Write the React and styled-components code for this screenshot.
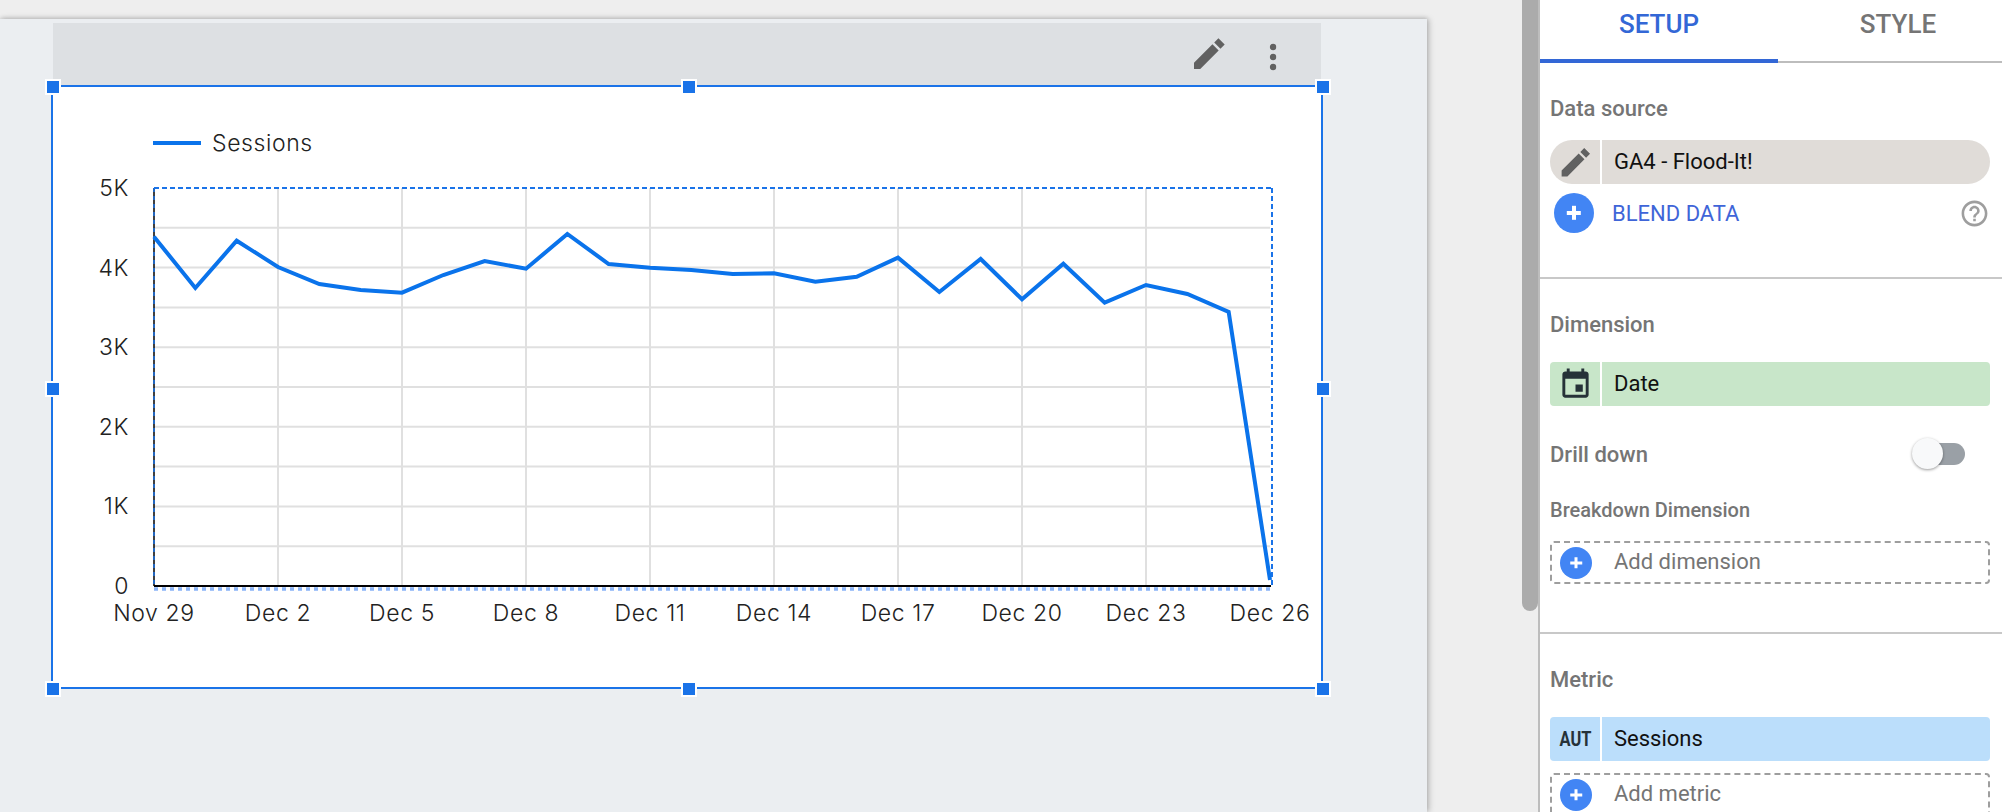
import React from "react";
import styled, { createGlobalStyle } from "styled-components";

const GlobalStyle = createGlobalStyle`
  html, body {
    margin: 0;
    padding: 0;
    background: #eeeeee;
    overflow: hidden;
  }
  * { box-sizing: border-box; }
`;

const Layout = styled.div`
  display: flex;
  width: 2002px;
  height: 812px;
  overflow: hidden;
  background: #eeeeee;
  font-family: Roboto, "Liberation Sans", sans-serif;
`;

const Workspace = styled.div`
  flex: 0 0 1522px;
  padding-top: 19px;
`;

const Page = styled.div`
  width: 1427px;
  height: 793px;
  padding: 4px 0 0 53px;
  background: #ebeef1;
  box-shadow: 2px 0 6px rgba(0, 0, 0, 0.22), 0 -1px 4px rgba(0, 0, 0, 0.12);
`;

const ChartHeader = styled.div`
  display: flex;
  align-items: center;
  justify-content: flex-end;
  width: 1268px;
  height: 62px;
  padding-right: 36px;
  gap: 32px;
  background: #dde0e3;
`;

const HeaderIcon = styled.svg`
  display: block;
  fill: #616161;
`;

const DotsIcon = styled(HeaderIcon)`
  margin-top: 6px;
`;

const ChartFrame = styled.div`
  position: relative;
  width: 1272px;
  height: 604px;
  margin-left: -2px;
  background: #ffffff;
  border: 2px solid #1a73e8;
`;

const Handle = styled.span`
  position: absolute;
  width: 16px;
  height: 16px;
  background: #1a73e8;
  border: 2px solid #ffffff;
  left: ${(p) => p.$x};
  top: ${(p) => p.$y};
  transform: translate(-50%, -50%);
`;

const Legend = styled.div`
  display: flex;
  align-items: center;
  gap: 11px;
  padding: 43px 0 0 100px;
  height: 68px;
`;

const LegendLine = styled.span`
  width: 48px;
  height: 4px;
  background: #0a73eb;
`;

const LegendText = styled.span`
  font-family: Inter, sans-serif;
  font-weight: 300;
  font-size: 23px;
  letter-spacing: 0.6px;
  color: #222222;
`;

const ChartSvg = styled.svg`
  display: block;
  margin-left: -53px;
  text {
    font-family: Inter, sans-serif;
    font-weight: 300;
    font-size: 23px;
    letter-spacing: 0.6px;
    fill: #222222;
  }
`;

const Scrollbar = styled.div`
  flex: 0 0 18px;
  border-right: 2px solid #bdbdbd;
`;

const ScrollThumb = styled.div`
  width: 16px;
  height: 611px;
  background: #ababab;
  border-radius: 0 0 8px 8px;
`;

const Panel = styled.aside`
  flex: 0 0 462px;
  background: #ffffff;
  overflow: hidden;
`;

const Tabs = styled.div`
  display: grid;
  grid-template-columns: 238px 240px;
  height: 63px;
  border-bottom: 2px solid #bdbdbd;
`;

const Tab = styled.div`
  height: 63px;
  padding-top: 8px;
  text-align: center;
  font-size: 26px;
  line-height: 32px;
  font-weight: 500;
  color: ${(p) => (p.$active ? "#3367d6" : "#757575")};
  border-bottom: ${(p) => (p.$active ? "4px solid #3367d6" : "none")};
`;

const Section = styled.section`
  height: ${(p) => p.$height}px;
  padding: 0 12px 0 10px;
  border-bottom: ${(p) => (p.$last ? "none" : "2px solid #c8c8c8")};
`;

const SectionTitle = styled.div`
  color: #757575;
  font-weight: 500;
  font-size: ${(p) => p.$size || 22}px;
  line-height: 24px;
  padding-top: ${(p) => p.$top}px;
  margin-bottom: ${(p) => p.$bottom}px;
`;

const Chip = styled.div`
  display: flex;
  height: 44px;
  border-radius: ${(p) => (p.$pill ? "22px" : "4px")};
  overflow: hidden;
  background: ${(p) => p.$color};
`;

const ChipIcon = styled.div`
  flex: 0 0 50px;
  display: flex;
  align-items: center;
  justify-content: center;
`;

const ChipLabel = styled.div`
  flex: 1;
  margin-left: 2px;
  padding: 0 0 2px 12px;
  display: flex;
  align-items: center;
  font-size: 22px;
  color: #111111;
  box-shadow: -2px 0 0 #ffffff;
`;

const FieldType = styled.span`
  font-size: 20px;
  font-weight: 700;
  color: #263238;
  transform: scaleX(0.82);
`;

const BlendRow = styled.div`
  display: flex;
  align-items: center;
  height: 40px;
  margin-top: 9px;
  padding: 0 0 0 4px;
`;

const BlendText = styled.span`
  margin-left: 18px;
  flex: 1;
  color: #3f65d8;
  font-size: 22px;
`;

const PlusCircle = styled.span`
  position: relative;
  flex: none;
  display: block;
  width: ${(p) => p.$size}px;
  height: ${(p) => p.$size}px;
  border-radius: 50%;
  background: #4285f4;
  &::before, &::after {
    content: "";
    position: absolute;
    left: 50%;
    top: 50%;
    background: #ffffff;
    transform: translate(-50%, -50%);
  }
  &::before {
    width: ${(p) => p.$size * 0.36}px;
    height: ${(p) => (p.$size > 36 ? 4 : 3)}px;
  }
  &::after {
    width: ${(p) => (p.$size > 36 ? 4 : 3)}px;
    height: ${(p) => p.$size * 0.36}px;
  }
`;

const ToggleRow = styled.div`
  display: flex;
  align-items: center;
  justify-content: space-between;
  height: 32px;
  margin-top: 32px;
  padding-right: 25px;
`;

const ToggleLabel = styled.span`
  color: #757575;
  font-weight: 500;
  font-size: 22px;
`;

const Toggle = styled.span`
  position: relative;
  display: block;
  width: 38px;
  height: 22px;
  border-radius: 11px;
  background: #9aa0a6;
`;

const ToggleKnob = styled.span`
  position: absolute;
  left: -15px;
  top: -5px;
  width: 31px;
  height: 31px;
  border-radius: 50%;
  background: #f8f9fa;
  box-shadow: 0 1px 3px rgba(0, 0, 0, 0.4);
`;

const AddBox = styled.div`
  display: flex;
  align-items: center;
  height: 43px;
  padding: 0 0 0 8px;
  border: 2px dashed #9e9e9e;
  border-radius: 4px;
  color: #757575;
  font-size: 22px;
  margin-top: ${(p) => p.$top || 0}px;
`;

const AddText = styled.span`
  margin: -2px 0 0 22px;
`;

const MaterialIcon = ({ d, size, fill }) => (
  <HeaderIcon width={size} height={size} viewBox="0 0 24 24" style={{ fill }}>
    <path d={d} />
  </HeaderIcon>
);

const PENCIL = "M3 17.25V21h3.75L17.81 9.94l-3.75-3.75L3 17.25zM21.41 6.34l-3.75-3.75-2.53 2.54 3.75 3.75 2.53-2.54z";
const EVENT = "M17 12h-5v5h5v-5zM16 1v2H8V1H6v2H5c-1.11 0-1.99.9-1.99 2L3 19c0 1.1.89 2 2 2h14c1.1 0 2-.9 2-2V5c0-1.1-.9-2-2-2h-1V1h-2zm3 18H5V8h14v11z";
const HELP = "M11 18h2v-2h-2v2zm1-16C6.48 2 2 6.48 2 12s4.48 10 10 10 10-4.48 10-10S17.52 2 12 2zm0 18c-4.41 0-8-3.59-8-8s3.59-8 8-8 8 3.59 8 8-3.59 8-8 8zm0-14c-2.21 0-4 1.79-4 4h2c0-1.1.9-2 2-2s2 .9 2 2c0 2-3 1.75-3 5h2c0-2.25 3-2.5 3-5 0-2.21-1.79-4-4-4z";

// sessions per day, as pixel heights read off the reference
const SERIES = [
  236.7, 288, 240.7, 267, 284, 290, 292.7, 275, 261, 268.7, 234, 264, 267.7, 270,
  274, 273.3, 281.7, 276.7, 257.7, 292, 259, 299.3, 263.7, 302.7, 285, 294, 312, 580,
];
const PLOT = { left: 154, right: 1270, top: 188, bottom: 586 };
const DAY = (PLOT.right - PLOT.left) / 27;
const ROW = (PLOT.bottom - PLOT.top) / 10;
const X_LABELS = ["Nov 29", "Dec 2", "Dec 5", "Dec 8", "Dec 11", "Dec 14", "Dec 17", "Dec 20", "Dec 23", "Dec 26"];
const Y_LABELS = ["5K", "4K", "3K", "2K", "1K", "0"];

const HANDLE_STOPS = ["0%", "calc(50% + 2px)", "calc(100% + 2px)"];

// the svg's origin sits at page (0, 155), so the plot uses page coordinates
function LineChart() {
  const points = SERIES.map((y, i) => `${PLOT.left + i * DAY},${y}`).join(" ");
  return (
    <ChartSvg width="1320" height="500" viewBox="0 155 1320 500">
      {Array.from({ length: 9 }, (_, i) => (
        <line key={i} x1={PLOT.left} x2={PLOT.right} y1={PLOT.top + (i + 1) * ROW} y2={PLOT.top + (i + 1) * ROW} stroke="#e0e0e0" strokeWidth="2" />
      ))}
      {X_LABELS.slice(1, -1).map((_, i) => (
        <line key={i} x1={PLOT.left + (i + 1) * 124} x2={PLOT.left + (i + 1) * 124} y1={PLOT.top} y2={PLOT.bottom} stroke="#e0e0e0" strokeWidth="2" />
      ))}
      <line x1={PLOT.left} x2={PLOT.right + 1} y1={PLOT.bottom} y2={PLOT.bottom} stroke="#000000" strokeWidth="2" />
      <line x1={PLOT.left} x2={PLOT.left} y1={PLOT.top} y2={PLOT.bottom} stroke="#000000" strokeWidth="1.5" />
      <line x1={PLOT.left} x2={PLOT.left} y1={PLOT.top} y2={PLOT.bottom} stroke="#1a73e8" strokeWidth="1.5" strokeDasharray="4 4" />
      <line x1={PLOT.left} x2={PLOT.right + 2} y1={PLOT.top} y2={PLOT.top} stroke="#1a73e8" strokeWidth="2" strokeDasharray="5 3" />
      <line x1={PLOT.right + 2} x2={PLOT.right + 2} y1={PLOT.top} y2={PLOT.bottom + 1} stroke="#1a73e8" strokeWidth="2" strokeDasharray="5 3" />
      <line x1={PLOT.left} x2={PLOT.right} y1={PLOT.bottom + 3} y2={PLOT.bottom + 3} stroke="#8ab4f8" strokeWidth="3.5" strokeDasharray="4 4" />
      <polyline points={points} fill="none" stroke="#0a73eb" strokeWidth="4" strokeLinejoin="miter" />
      {Y_LABELS.map((label, i) => (
        <text key={label} x="129" y={PLOT.top + i * 2 * ROW + 8} textAnchor="end">{label}</text>
      ))}
      {X_LABELS.map((label, i) => (
        <text key={label} x={PLOT.left + i * 124} y="621" textAnchor="middle">{label}</text>
      ))}
    </ChartSvg>
  );
}

export default function App() {
  return (
    <Layout>
      <GlobalStyle />
      <Workspace>
        <Page>
          <ChartHeader>
            <MaterialIcon d={PENCIL} size={40} fill="#616161" />
            <DotsIcon width="24" height="34" viewBox="0 0 24 34">
              <circle cx="12" cy="7" r="3.2" />
              <circle cx="12" cy="17" r="3.2" />
              <circle cx="12" cy="27" r="3.2" />
            </DotsIcon>
          </ChartHeader>
          <ChartFrame>
            <Legend>
              <LegendLine />
              <LegendText>Sessions</LegendText>
            </Legend>
            <LineChart />
            {HANDLE_STOPS.map((x, i) =>
              HANDLE_STOPS.map((y, j) =>
                i === 1 && j === 1 ? null : <Handle key={`${i}-${j}`} $x={x} $y={y} />
              )
            )}
          </ChartFrame>
        </Page>
      </Workspace>
      <Scrollbar>
        <ScrollThumb />
      </Scrollbar>
      <Panel>
        <Tabs>
          <Tab $active>SETUP</Tab>
          <Tab>STYLE</Tab>
        </Tabs>
        <Section $height={216}>
          <SectionTitle $top={34} $bottom={19}>Data source</SectionTitle>
          <Chip $pill $color="#e0dcd8">
            <ChipIcon>
              <MaterialIcon d={PENCIL} size={37} fill="#616161" />
            </ChipIcon>
            <ChipLabel>GA4 - Flood-It!</ChipLabel>
          </Chip>
          <BlendRow>
            <PlusCircle $size={40} />
            <BlendText>BLEND DATA</BlendText>
            <MaterialIcon d={HELP} size={31} fill="#9e9e9e" />
          </BlendRow>
        </Section>
        <Section $height={355}>
          <SectionTitle $top={34} $bottom={25}>Dimension</SectionTitle>
          <Chip $color="#c8e6c9">
            <ChipIcon>
              <MaterialIcon d={EVENT} size={35} fill="#263238" />
            </ChipIcon>
            <ChipLabel>Date</ChipLabel>
          </Chip>
          <ToggleRow>
            <ToggleLabel>Drill down</ToggleLabel>
            <Toggle>
              <ToggleKnob />
            </Toggle>
          </ToggleRow>
          <SectionTitle $size={20} $top={28} $bottom={19}>Breakdown Dimension</SectionTitle>
          <AddBox>
            <PlusCircle $size={32} />
            <AddText>Add dimension</AddText>
          </AddBox>
        </Section>
        <Section $height={180} $last>
          <SectionTitle $top={34} $bottom={25}>Metric</SectionTitle>
          <Chip $color="#bbdefb">
            <ChipIcon>
              <FieldType>AUT</FieldType>
            </ChipIcon>
            <ChipLabel>Sessions</ChipLabel>
          </Chip>
          <AddBox $top={12}>
            <PlusCircle $size={32} />
            <AddText>Add metric</AddText>
          </AddBox>
        </Section>
      </Panel>
    </Layout>
  );
}
